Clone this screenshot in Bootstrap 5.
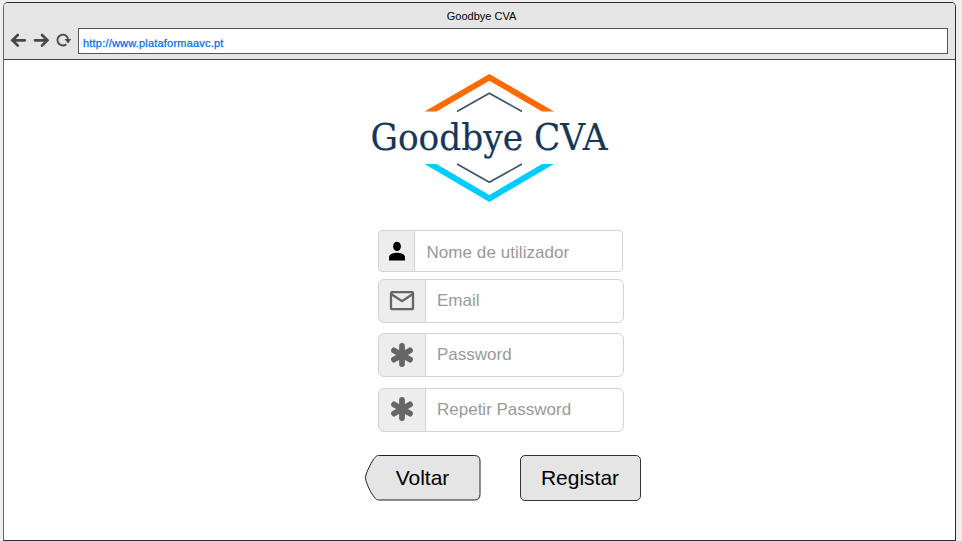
<!DOCTYPE html>
<html lang="pt">
<head>
<meta charset="utf-8">
<meta name="viewport" content="width=device-width, initial-scale=1">
<title>Goodbye CVA</title>
<link href="https://cdn.jsdelivr.net/npm/bootstrap@5.3.0/dist/css/bootstrap.min.css" rel="stylesheet">
<style>
body{background:#eee;font-family:"Liberation Sans",Arial,sans-serif;height:541px;overflow:hidden;color:#000}
.browser{margin:2px 6px 0 3px;height:539px;border:1px solid #2b2b2b;border-left-color:#666;border-radius:5px 5px 0 0;overflow:hidden}
.chrome{height:57px;background:#e5e5e5;border-bottom:1px solid #444}
.win-title{font-size:11px;line-height:13px;padding-top:7px;padding-left:4px;height:25px}
.tools{height:26px;padding-right:7px}
.tools svg{display:block;flex:none}
.address{height:26px;border:1px solid #555;font-size:11px;line-height:14px;color:#0070ee;padding:7px 0 0 4px;margin-left:5px;letter-spacing:.2px;-webkit-text-stroke:.25px #0070ee}
.logo{display:block;margin:5px 0 0 356px;overflow:visible}
.fields{width:246px;margin:20px 0 0 374px}
.field{height:44px;margin-bottom:10.4px}
.field .input-group-text{width:48px;background:#ededed;border-color:#d3d3d3;border-radius:6px 0 0 6px;padding:0 0 1px}
.field .form-control{border-color:#d3d3d3;border-radius:0 6px 6px 0;font-size:17px;line-height:20px;padding:0 11px;color:#999}
.field .form-control::placeholder{color:#999;opacity:1}
.field.user{width:245px;height:42px;margin-bottom:7px}
.field.user .input-group-text{width:37px;border-radius:4px 0 0 4px}
.field.user .form-control{border-radius:0 4px 4px 0;padding:3px 12px 0 11.5px;letter-spacing:.06px}
.actions{margin:23px 0 0 361px;gap:39px}
.actions .btn{font-size:21px;line-height:24px;color:#000;padding:0;border:0}
.actions .btn.btn-register{width:121px;height:46px;border:1px solid #333;border-radius:5px;background:#e5e5e5;padding-right:1px}
.actions .btn-back{width:116px;height:46px}
</style>
<script src="https://cdn.jsdelivr.net/npm/bootstrap@5.3.0/dist/js/bootstrap.bundle.min.js"></script>
</head>
<body>
<div class="browser bg-white">
  <header class="chrome">
    <div class="win-title text-center">Goodbye CVA</div>
    <div class="tools d-flex">
      <svg width="69" height="26" viewBox="4 28 69 26" fill="none" stroke="#484848" stroke-width="2.7">
        <path stroke-linecap="round" d="M24.8 40.3H13M17.8 35L12.4 40.3L17.8 45.6M35 40.3H47M42 35L47.4 40.3L42 45.6"/>
        <path stroke-width="1.9" d="M66.3 44.2A5.4 5.4 0 1 1 68.2 40"/>
        <path fill="#484848" stroke="none" d="M64.6 39H71.2L68 43.4Z"/>
      </svg>
      <div class="address flex-grow-1 bg-white">http://www.plataformaavc.pt</div>
    </div>
  </header>
  <main>
    <svg class="logo" width="260" height="145" viewBox="360 65 260 145" role="img" aria-label="Goodbye CVA">
      <path fill="#ff6a00" d="M424.5 111.5L489.3 74L554 111.5H542L489.3 80.7L436.5 111.5Z"/>
      <path fill="#00ccff" d="M424.5 164L489.3 202L554 164H542L489.3 195L436.5 164Z"/>
      <path fill="none" stroke="#3b536d" stroke-width="1.6" d="M457 111.5L489.3 93.2L522 111.5M457 164L489.3 182.3L522 164"/>
      <text x="370.5" y="150" textLength="237" lengthAdjust="spacingAndGlyphs" font-family="DejaVu Serif,serif" font-size="38" fill="#17375a" stroke="#17375a" stroke-width=".2">Goodbye CVA</text>
    </svg>
    <form>
      <div class="fields">
        <div class="input-group field user">
          <span class="input-group-text justify-content-center"><svg width="16" height="20" viewBox="0 0 16 20"><ellipse cx="8" cy="5.4" rx="3.9" ry="4.7"/><path d="M0 19.5V16.5C0 13 4 11.7 8 11.7S16 13 16 16.5V19.5Z"/></svg></span>
          <input class="form-control" type="text" placeholder="Nome de utilizador">
        </div>
        <div class="input-group field">
          <span class="input-group-text justify-content-center"><svg width="26" height="20" viewBox="0 0 26 20" fill="none" stroke="#666" stroke-width="2.3"><rect x="2" y="1" width="22" height="17.2" rx="1.5"/><path d="M2.5 3.2L13 10.2L23.5 3.2"/></svg></span>
          <input class="form-control" type="email" placeholder="Email">
        </div>
        <div class="input-group field">
          <span class="input-group-text justify-content-center"><svg width="24" height="26" viewBox="0 0 24 26" stroke="#666" stroke-width="5.8" stroke-linecap="round"><path d="M12 3.9V22.1M4 8.4L20 17.6M20 8.4L4 17.6"/></svg></span>
          <input class="form-control" type="text" placeholder="Password">
        </div>
        <div class="input-group field">
          <span class="input-group-text justify-content-center"><svg width="24" height="26" viewBox="0 0 24 26" stroke="#666" stroke-width="5.8" stroke-linecap="round"><path d="M12 3.9V22.1M4 8.4L20 17.6M20 8.4L4 17.6"/></svg></span>
          <input class="form-control" type="text" placeholder="Repetir Password">
        </div>
      </div>
      <div class="actions d-flex">
        <button type="button" class="btn btn-back"><svg class="d-block" width="116" height="46" viewBox="0 0 116 46"><path fill="#e5e5e5" stroke="#222" d="M13.5 .5H109.5Q115 .5 115 6V39.5Q115 45 109.5 45H13.5C10.5 45 8 40.5 5 35.5C2.5 30 .5 26 .5 22.8C.5 19.5 2.5 15.5 5 10.5C8 5 10.5 .5 13.5 .5Z"/><text x="57.5" y="30" text-anchor="middle" font-size="21">Voltar</text></svg></button>
        <button type="submit" class="btn btn-register">Registar</button>
      </div>
    </form>
  </main>
</div>
</body>
</html>
